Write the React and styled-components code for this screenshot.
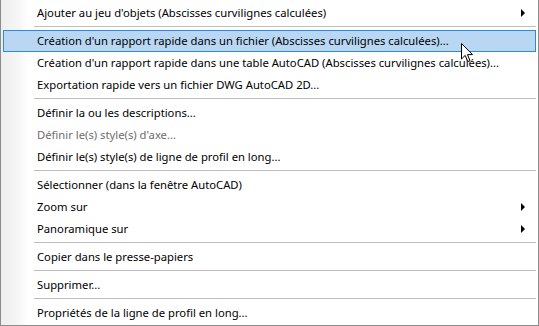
import React from "react";
import styled, { createGlobalStyle } from "styled-components";

const GlobalStyle = createGlobalStyle`
  html, body {
    margin: 0;
    padding: 0;
    background: #ffffff;
  }
  body {
    font-family: "Noto Sans", "Liberation Sans", sans-serif;
  }
`;

const Menu = styled.div`
  position: relative;
  width: 539px;
  height: 326px;
  box-sizing: border-box;
  padding: 2px 1px 1px;
  border: 1px solid #8c8c8c;
  border-top: none;
  background: linear-gradient(
    to right,
    #eeeeee 0,
    #f6f6f6 18px,
    #fdfdfd 25px,
    #ffffff 26px
  );
  display: flex;
  flex-direction: column;
`;

const Item = styled.div`
  height: 22px;
  box-sizing: border-box;
  margin: 0 1px;
  padding: 0 10px 0 33px;
  display: flex;
  align-items: center;
  justify-content: space-between;
  border: 1px solid ${({ $active }) => ($active ? "#2b8ae2" : "transparent")};
  background: ${({ $active }) => ($active ? "#b9d7f3" : "transparent")};
  color: ${({ $disabled }) => ($disabled ? "#6d6d6d" : "#000000")};
  font-size: 11.25px;
  white-space: nowrap;
`;

const Label = styled.span`
  line-height: 1;
`;

const Arrow = styled.span`
  width: 0;
  height: 0;
  border-top: 4px solid transparent;
  border-bottom: 4px solid transparent;
  border-left: 4px solid #000000;
`;

const Separator = styled.div`
  height: 6px;
  box-sizing: border-box;
  padding-top: 2px;
  margin: 0 1px 0 32px;

  &::before {
    content: "";
    display: block;
    height: 1px;
    background: #bdbdbd;
  }
`;

const Cursor = styled.svg`
  position: absolute;
  left: 460px;
  top: 43px;
`;

const items = [
  { label: "Ajouter au jeu d'objets (Abscisses curvilignes calculées)", sub: true },
  "-",
  { label: "Création d'un rapport rapide dans un fichier (Abscisses curvilignes calculées)...", active: true },
  { label: "Création d'un rapport rapide dans une table AutoCAD (Abscisses curvilignes calculées)..." },
  { label: "Exportation rapide vers un fichier DWG AutoCAD 2D..." },
  "-",
  { label: "Définir la ou les descriptions..." },
  { label: "Définir le(s) style(s) d'axe...", disabled: true },
  { label: "Définir le(s) style(s) de ligne de profil en long..." },
  "-",
  { label: "Sélectionner (dans la fenêtre AutoCAD)" },
  { label: "Zoom sur", sub: true },
  { label: "Panoramique sur", sub: true },
  "-",
  { label: "Copier dans le presse-papiers" },
  "-",
  { label: "Supprimer..." },
  "-",
  { label: "Propriétés de la ligne de profil en long..." },
];

export default function App() {
  return (
    <>
      <GlobalStyle />
      <Menu>
        {items.map((it, i) =>
          it === "-" ? (
            <Separator key={i} />
          ) : (
            <Item key={i} $active={it.active} $disabled={it.disabled}>
              <Label>{it.label}</Label>
              {it.sub && <Arrow />}
            </Item>
          )
        )}
        <Cursor width="13" height="20" viewBox="0 0 13 20">
          <path
            d="M0.5 0.5 L0.5 16 L4.2 12.4 L6.8 18.6 L9 17.7 L6.5 11.6 L11.5 11.6 Z"
            fill="#ffffff"
            stroke="#000000"
            strokeWidth="1"
            strokeLinejoin="miter"
          />
        </Cursor>
      </Menu>
    </>
  );
}
